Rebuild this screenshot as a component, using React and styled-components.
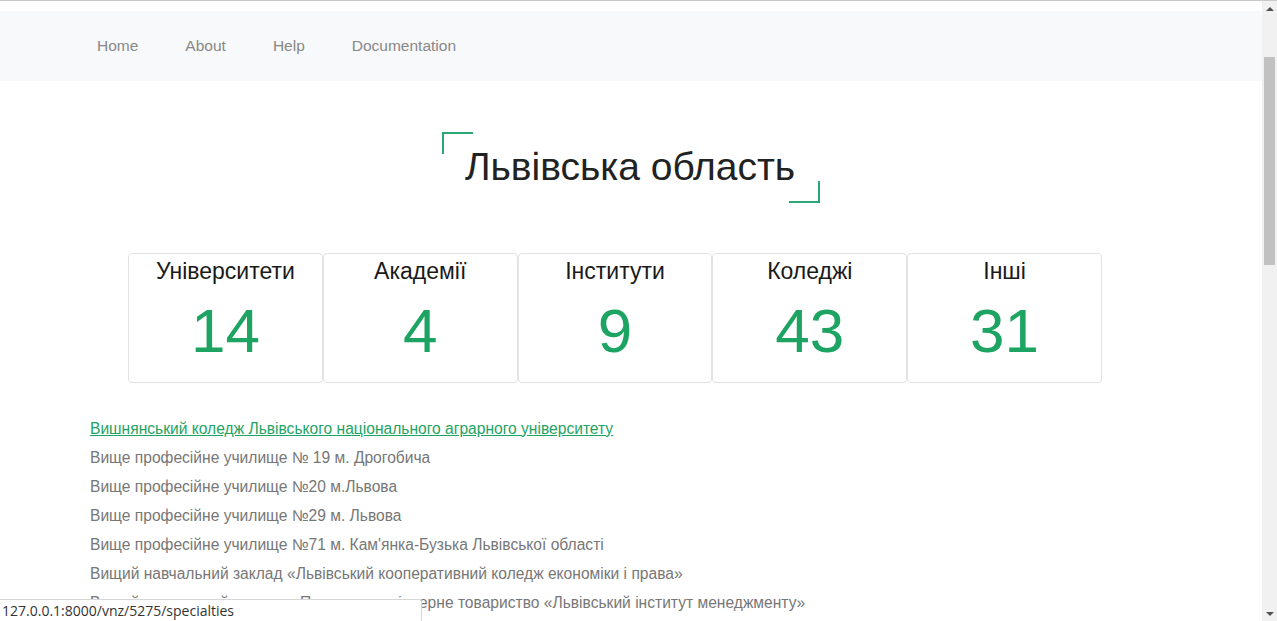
import React from "react";
import styled, { createGlobalStyle } from "styled-components";

const Global = createGlobalStyle`
  html, body { margin: 0; padding: 0; background: #fff; overflow: hidden; }
  body { font-family: "Liberation Sans", Arial, sans-serif; }
  * { box-sizing: border-box; }
`;

const Frame = styled.div`
  width: 1277px;
  height: 621px;
  border-top: 1px solid #c9c9c9;
  display: flex;
  overflow: hidden;
`;

const Viewport = styled.div`
  flex: 1;
  display: flex;
  flex-direction: column;
  padding-top: 10px;
  overflow: hidden;
`;

const Scrollbar = styled.div`
  width: 15px;
  background: #f1f1f1;
  display: flex;
  flex-direction: column;
  align-items: center;
  padding: 6px 0 5px;
`;

const Arrow = styled.div`
  width: 0;
  height: 0;
  border-left: 4px solid transparent;
  border-right: 4px solid transparent;
  ${(p) => (p.$down ? "border-top: 4px solid #505050;" : "border-bottom: 4px solid #505050;")}
  margin-top: ${(p) => (p.$down ? "auto" : "0")};
`;

const Thumb = styled.div`
  width: 11px;
  height: 208px;
  margin-top: 46px;
  background: #c1c1c1;
`;

const Navbar = styled.nav`
  height: 70px;
  background: #f8f9fa;
  display: flex;
  align-items: center;
  padding-left: 73.5px;
`;

const NavLink = styled.a`
  font-size: 15.5px;
  color: #888;
  padding: 0 23.5px;
  text-decoration: none;
`;

const Main = styled.main`
  display: flex;
  flex-direction: column;
`;

const TitleWrap = styled.div`
  align-self: center;
  margin-top: 51px;
  position: relative;
  padding: 12px 25px 12px 23px;
  &::before {
    content: "";
    position: absolute;
    left: 0;
    top: 0;
    width: 29px;
    height: 20px;
    border-top: 2px solid #2aa876;
    border-left: 2px solid #2aa876;
  }
  &::after {
    content: "";
    position: absolute;
    right: 0;
    bottom: 0;
    width: 29px;
    height: 20px;
    border-bottom: 2px solid #2aa876;
    border-right: 2px solid #2aa876;
  }
`;

const Title = styled.h1`
  margin: 0;
  font-size: 39px;
  line-height: 1.2;
  font-weight: 400;
  color: #222;
`;

const Cards = styled.div`
  margin: 50px 0 0 128px;
  width: 974px;
  display: grid;
  grid-template-columns: repeat(5, 1fr);
`;

const Card = styled.div`
  height: 130px;
  border: 1px solid #e2e2e2;
  border-radius: 4px;
  display: flex;
  flex-direction: column;
  align-items: center;
  padding-top: 4px;
`;

const CardLabel = styled.div`
  font-size: 23px;
  line-height: 1.2;
  color: #1a1a1a;
`;

const CardNumber = styled.div`
  margin-top: 9px;
  font-size: 62px;
  line-height: 1.2;
  color: #1da462;
`;

const List = styled.ul`
  list-style: none;
  margin: 31px 0 0 90px;
  padding: 0;
`;

const Item = styled.li`
  font-size: 15.6px;
  line-height: 29px;
  color: ${(p) => (p.$active ? "#1da462" : "#777")};
  text-decoration: ${(p) => (p.$active ? "underline" : "none")};
  white-space: nowrap;
`;

const StatusBar = styled.div`
  position: fixed;
  left: 0;
  bottom: 0;
  width: 422px;
  height: 22px;
  background: #fff;
  border-top: 1px solid #d6d6d6;
  border-right: 1px solid #d6d6d6;
  border-top-right-radius: 3px;
  font-family: "Open Sans", "DejaVu Sans", sans-serif;
  font-size: 14px;
  line-height: 21px;
  color: #333;
  padding-left: 2px;
`;

const navItems = ["Home", "About", "Help", "Documentation"];

const stats = [
  ["Університети", 14],
  ["Академії", 4],
  ["Інститути", 9],
  ["Коледжі", 43],
  ["Інші", 31],
];

const items = [
  "Вишнянський коледж Львівського національного аграрного університету",
  "Вище професійне училище № 19 м. Дрогобича",
  "Вище професійне училище №20 м.Львова",
  "Вище професійне училище №29 м. Львова",
  "Вище професійне училище №71 м. Кам'янка-Бузька Львівської області",
  "Вищий навчальний заклад «Львівський кооперативний коледж економіки і права»",
  "Вищий навчальний заклад – Приватне акціонерне товариство «Львівський інститут менеджменту»",
];

export default function App() {
  return (
    <>
      <Global />
      <Frame>
        <Viewport>
          <Navbar>
            {navItems.map((n) => (
              <NavLink key={n} href="#">
                {n}
              </NavLink>
            ))}
          </Navbar>
          <Main>
            <TitleWrap>
              <Title>Львівська область</Title>
            </TitleWrap>
            <Cards>
              {stats.map(([label, num]) => (
                <Card key={label}>
                  <CardLabel>{label}</CardLabel>
                  <CardNumber>{num}</CardNumber>
                </Card>
              ))}
            </Cards>
            <List>
              {items.map((t, i) => (
                <Item key={t} $active={i === 0}>
                  {t}
                </Item>
              ))}
            </List>
          </Main>
        </Viewport>
        <Scrollbar>
          <Arrow />
          <Thumb />
          <Arrow $down />
        </Scrollbar>
      </Frame>
      <StatusBar>127.0.0.1:8000/vnz/5275/specialties</StatusBar>
    </>
  );
}
